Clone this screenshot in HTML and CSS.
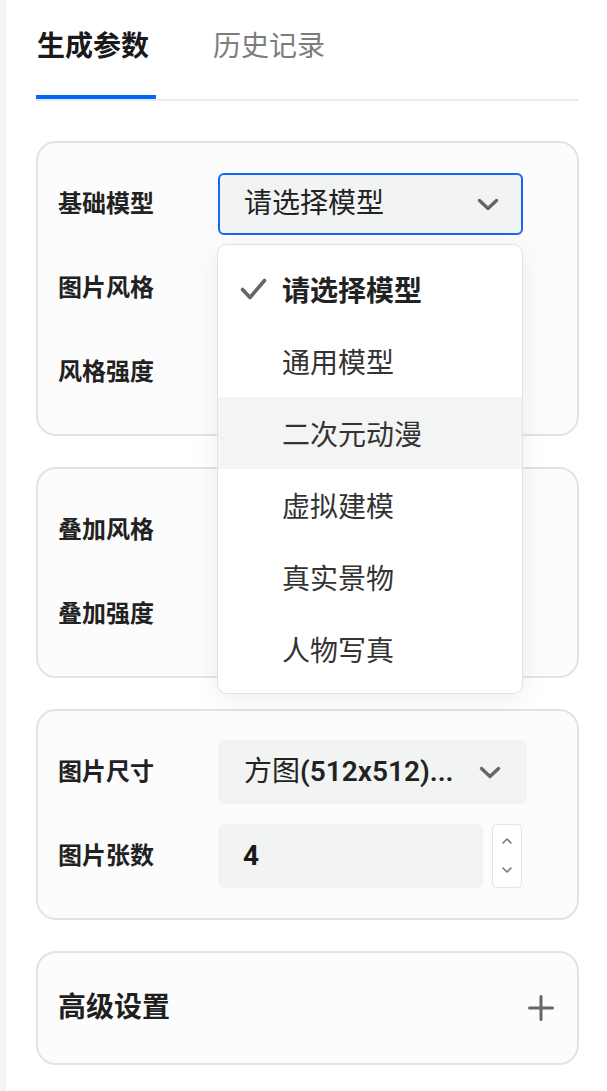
FILE: index.html
```html
<!DOCTYPE html>
<html lang="zh-CN">
<head>
<meta charset="utf-8">
<title>生成参数</title>
<link rel="stylesheet" href="styles.css">
</head>
<body>
<div class="page">
  <div class="edge"></div>
  <main class="panel">
    <nav class="tabs">
      <div class="tab active">生成参数</div>
      <div class="tab">历史记录</div>
    </nav>

    <section class="card">
      <div class="row">
        <div class="label">基础模型</div>
        <div class="control select-wrap">
          <div class="select focused">
            <span class="select-text">请选择模型</span>
            <svg class="chev" width="22" height="13" viewBox="0 0 22 13"><path d="M2.5 2.5 L11 10.5 L19.5 2.5" fill="none" stroke="#666" stroke-width="3.4" stroke-linecap="round" stroke-linejoin="round"/></svg>
          </div>
          <ul class="dropdown">
            <li class="item selected">
              <svg class="check" width="27" height="22" viewBox="0 0 27 22"><path d="M2.5 11.5 L10 19.5 L24.5 2.5" fill="none" stroke="#666" stroke-width="3.6" stroke-linecap="round" stroke-linejoin="round"/></svg>
              <span>请选择模型</span>
            </li>
            <li class="item"><span>通用模型</span></li>
            <li class="item hover"><span>二次元动漫</span></li>
            <li class="item"><span>虚拟建模</span></li>
            <li class="item"><span>真实景物</span></li>
            <li class="item"><span>人物写真</span></li>
          </ul>
        </div>
      </div>
      <div class="row"><div class="label">图片风格</div></div>
      <div class="row"><div class="label">风格强度</div></div>
    </section>

    <section class="card">
      <div class="row"><div class="label">叠加风格</div></div>
      <div class="row"><div class="label">叠加强度</div></div>
    </section>

    <section class="card">
      <div class="row">
        <div class="label">图片尺寸</div>
        <div class="control">
          <div class="select wide">
            <span class="select-text">方图<b>(512x512)...</b></span>
            <svg class="chev" width="22" height="13" viewBox="0 0 22 13"><path d="M2.5 2.5 L11 10.5 L19.5 2.5" fill="none" stroke="#666" stroke-width="3.4" stroke-linecap="round" stroke-linejoin="round"/></svg>
          </div>
        </div>
      </div>
      <div class="row">
        <div class="label">图片张数</div>
        <div class="control number">
          <div class="num-input">4</div>
          <div class="spinner">
            <svg width="12" height="8" viewBox="0 0 12 8"><path d="M2 6 L6 2 L10 6" fill="none" stroke="#777" stroke-width="1.6" stroke-linecap="round" stroke-linejoin="round"/></svg>
            <svg width="12" height="8" viewBox="0 0 12 8"><path d="M2 2 L6 6 L10 2" fill="none" stroke="#777" stroke-width="1.6" stroke-linecap="round" stroke-linejoin="round"/></svg>
          </div>
        </div>
      </div>
    </section>

    <section class="card advanced">
      <div class="adv-title">高级设置</div>
      <svg class="plus" width="26" height="26" viewBox="0 0 26 26"><path d="M13 1.5 V24.5 M1.5 13 H24.5" fill="none" stroke="#666" stroke-width="3" stroke-linecap="round"/></svg>
    </section>
  </main>
</div>
</body>
</html>
```

FILE: styles.css
```css
* { box-sizing: border-box; }

html, body {
  margin: 0;
  padding: 0;
  background: #ffffff;
}

body {
  font-family: Roboto, "Noto Sans CJK SC", sans-serif;
  color: #222;
}

.page {
  display: flex;
  min-height: 1091px;
}

.edge {
  width: 6px;
  flex: 0 0 6px;
  background: #f3f4f8;
}

.panel {
  flex: 1;
  padding: 0 28px 0 30px;
  display: flex;
  flex-direction: column;
}

/* Tabs */
.tabs {
  display: flex;
  gap: 56px;
  padding-top: 27px;
  border-bottom: 2px solid #ebebeb;
}

.tab {
  font-size: 28px;
  line-height: 40px;
  padding: 0 0 28px 1px;
  border-bottom: 4px solid transparent;
  color: #7d7d7d;
}

.tab.active {
  width: 120px;
  color: #1a1a1a;
  font-weight: 700;
  border-bottom-color: #0066ff;
}

/* Cards */
.card {
  margin-top: 31px;
  border: 2px solid #e3e3e3;
  border-radius: 20px;
  background: #fcfcfc;
  padding: 30px 20px 31px;
  display: flex;
  flex-direction: column;
  gap: 22px;
}

.tabs + .card { margin-top: 40px; }

.row {
  display: flex;
  align-items: center;
  height: 62px;
}

.label {
  width: 160px;
  flex: 0 0 160px;
  font-size: 24px;
  font-weight: 700;
  color: #222;
  line-height: 32px;
}

.control {
  position: relative;
  width: 305px;
  height: 62px;
}

.select {
  height: 62px;
  border-radius: 6px;
  background: #f2f3f3;
  display: flex;
  align-items: center;
  justify-content: space-between;
  padding: 0 24px 0 26px;
}

.select.focused {
  border: 2px solid #1468f2;
  padding: 0 22px 0 24px;
}

.select.wide {
  width: 309px;
  height: 64px;
  margin-top: -1px;
  padding-right: 26px;
}

.select-text {
  font-size: 28px;
  line-height: 40px;
  color: #222;
  white-space: nowrap;
}

.select-text b {
  font-weight: 600;
}

.chev { display: block; }

/* Dropdown */
.dropdown {
  position: absolute;
  z-index: 10;
  top: 71px;
  left: -1px;
  width: 306px;
  margin: 0;
  padding: 8px 0;
  list-style: none;
  background: #ffffff;
  border: 1px solid #e2e2e2;
  border-radius: 10px;
  box-shadow: 0 6px 28px rgba(0, 0, 0, 0.07);
}

.item {
  position: relative;
  height: 72px;
  display: flex;
  align-items: center;
  padding-left: 64px;
  font-size: 28px;
  color: #333;
}

.item.selected {
  font-weight: 700;
  color: #222;
}

.item.hover {
  background: #f3f4f4;
}

.check {
  position: absolute;
  left: 22px;
  top: 25px;
}

/* Number input */
.control.number {
  display: flex;
  gap: 9px;
  width: 304px;
  height: 64px;
  margin-top: -1px;
}

.num-input {
  width: 265px;
  height: 64px;
  border-radius: 6px;
  background: #f2f3f3;
  padding-left: 25px;
  display: flex;
  align-items: center;
  font-size: 28px;
  font-weight: 700;
  color: #1a1a1a;
}

.spinner {
  width: 30px;
  height: 64px;
  border: 1px solid #e4e4e4;
  border-radius: 5px;
  background: #fff;
  display: flex;
  flex-direction: column;
  align-items: center;
  justify-content: center;
  gap: 21px;
}

.spinner svg { display: block; }

/* Advanced */
.card.advanced {
  flex-direction: row;
  align-items: center;
  justify-content: space-between;
  padding: 30px 23px 30px 20px;
  height: 114px;
}

.adv-title {
  font-size: 28px;
  font-weight: 700;
  color: #1f1f1f;
  line-height: 40px;
}

.plus { display: block; }
```
